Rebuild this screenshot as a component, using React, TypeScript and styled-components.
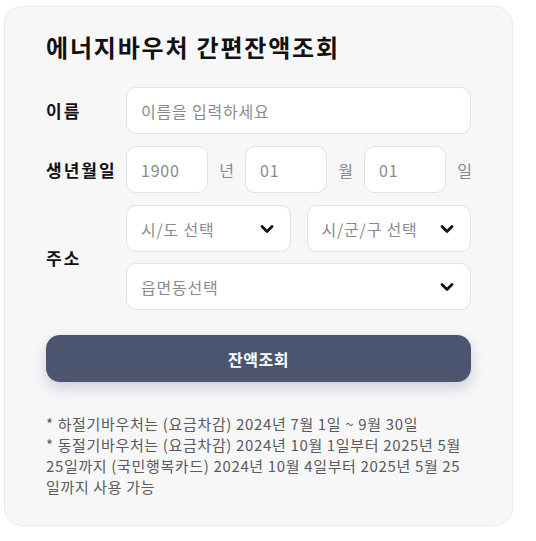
import { createGlobalStyle, styled } from "styled-components";

const GlobalStyle = createGlobalStyle`
  body {
    margin: 0;
    background: #ffffff;
    font-family: "Noto Sans CJK KR", "Noto Sans", sans-serif;
  }
  * {
    box-sizing: border-box;
  }
`;

const Card = styled.div`
  margin: 6px 0 0 4px;
  width: 509px;
  height: 520px;
  padding: 24px 41px 0 41px;
  background: #f7f7f8;
  border: 1px solid #e9e9ec;
  border-radius: 18px;
  display: flex;
  flex-direction: column;
`;

const Title = styled.h1`
  margin: 0 0 24px 0;
  font-size: 24px;
  font-weight: 700;
  color: #111;
  line-height: 32px;
  letter-spacing: 1.8px;
`;

const Row = styled.div`
  display: flex;
  align-items: center;
  margin-bottom: 12px;
`;

const Label = styled.div`
  width: 80px;
  flex-shrink: 0;
  font-size: 17px;
  font-weight: 700;
  letter-spacing: 2px;
  color: #111;
`;

const Field = styled.div<{ $w?: number }>`
  height: 47px;
  ${({ $w }) => ($w ? `width: ${$w}px; flex-shrink: 0;` : "flex: 1;")}
  background: #fff;
  border: 1px solid #e2e2e6;
  border-radius: 10px;
  display: flex;
  align-items: center;
  justify-content: space-between;
  padding: 0 16px 0 14px;
  font-size: 16px;
  letter-spacing: 0.8px;
  color: #8a8a8e;
`;

const Unit = styled.span`
  width: 37px;
  flex-shrink: 0;
  text-align: center;
  font-size: 16px;
  color: #8a8a8e;
`;

const AddressGrid = styled.div`
  flex: 1;
  display: grid;
  grid-template-columns: 1fr 1fr;
  gap: 11px 16px;
`;

const Wide = styled.div`
  grid-column: 1 / span 2;
  display: flex;
`;

const Button = styled.button`
  margin-top: 13px;
  height: 47px;
  width: 100%;
  border: none;
  border-radius: 14px;
  background: #4b5570;
  color: #fff;
  font-family: inherit;
  font-size: 16px;
  font-weight: 700;
  letter-spacing: 0.5px;
  box-shadow: 0 6px 14px rgba(60, 70, 90, 0.22);
`;

const Notes = styled.div`
  margin-top: 31px;
  font-size: 15px;
  line-height: 21px;
  letter-spacing: 0.65px;
  color: #5a5a5e;
`;

const Chevron = () => (
  <svg width="14" height="10" viewBox="0 0 14 10">
    <polyline points="2,2.5 7,7.5 12,2.5" fill="none" stroke="#111" strokeWidth="2.8" strokeLinecap="round" strokeLinejoin="round" />
  </svg>
);

const Select = ({ text }: { text: string }) => (
  <Field>
    <span>{text}</span>
    <Chevron />
  </Field>
);

export default function App() {
  return (
    <>
      <GlobalStyle />
      <Card>
        <Title>에너지바우처 간편잔액조회</Title>

        <Row>
          <Label>이름</Label>
          <Field>이름을 입력하세요</Field>
        </Row>

        <Row>
          <Label>생년월일</Label>
          <Field $w={82}>1900</Field>
          <Unit>년</Unit>
          <Field $w={82}>01</Field>
          <Unit>월</Unit>
          <Field $w={82}>01</Field>
          <Unit>일</Unit>
        </Row>

        <Row>
          <Label>주소</Label>
          <AddressGrid>
            <Select text="시/도 선택" />
            <Select text="시/군/구 선택" />
            <Wide>
              <Select text="읍면동선택" />
            </Wide>
          </AddressGrid>
        </Row>

        <Button>잔액조회</Button>

        <Notes>
          * 하절기바우처는 (요금차감) 2024년 7월 1일 ~ 9월 30일
          <br />* 동절기바우처는 (요금차감) 2024년 10월 1일부터 2025년 5월 25일까지 (국민행복카드) 2024년 10월 4일부터 2025년 5월 25일까지 사용 가능
        </Notes>
      </Card>
    </>
  );
}
